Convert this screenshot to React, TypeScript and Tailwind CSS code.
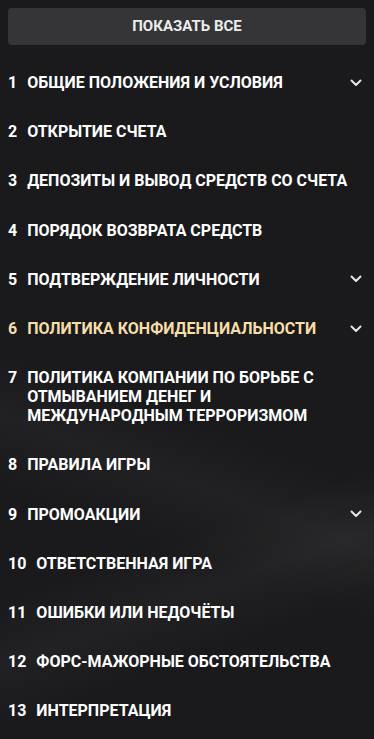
import React from "react";

interface Item { n: number; title: string; sub?: boolean; active?: boolean }

const ITEMS: Item[] = [
  { n: 1, title: "ОБЩИЕ ПОЛОЖЕНИЯ И УСЛОВИЯ", sub: true },
  { n: 2, title: "ОТКРЫТИЕ СЧЕТА" },
  { n: 3, title: "ДЕПОЗИТЫ И ВЫВОД СРЕДСТВ СО СЧЕТА" },
  { n: 4, title: "ПОРЯДОК ВОЗВРАТА СРЕДСТВ" },
  { n: 5, title: "ПОДТВЕРЖДЕНИЕ ЛИЧНОСТИ", sub: true },
  { n: 6, title: "ПОЛИТИКА КОНФИДЕНЦИАЛЬНОСТИ", sub: true, active: true },
  { n: 7, title: "ПОЛИТИКА КОМПАНИИ ПО БОРЬБЕ С ОТМЫВАНИЕМ ДЕНЕГ И МЕЖДУНАРОДНЫМ ТЕРРОРИЗМОМ" },
  { n: 8, title: "ПРАВИЛА ИГРЫ" },
  { n: 9, title: "ПРОМОАКЦИИ", sub: true },
  { n: 10, title: "ОТВЕТСТВЕННАЯ ИГРА" },
  { n: 11, title: "ОШИБКИ ИЛИ НЕДОЧЁТЫ" },
  { n: 12, title: "ФОРС-МАЖОРНЫЕ ОБСТОЯТЕЛЬСТВА" },
  { n: 13, title: "ИНТЕРПРЕТАЦИЯ" },
];

function Chevron() {
  return (
    <svg width="12" height="8" viewBox="0 0 12 8" fill="none" className="shrink-0 mr-1">
      <polyline points="1.5,1.5 6,6 10.5,1.5" stroke="#e6e6e6" strokeWidth="2" strokeLinecap="round" strokeLinejoin="round" />
    </svg>
  );
}

export default function App() {
  return (
    <div
      className="min-h-screen w-full bg-[#1a1a1c] bg-[linear-gradient(160deg,transparent_0%,transparent_68%,rgba(255,255,255,0.035)_75%,transparent_82%),linear-gradient(200deg,transparent_0%,transparent_55%,rgba(255,255,255,0.03)_62%,transparent_70%)] px-2 pt-2 pb-4 font-['Roboto',sans-serif]"
    >
      <button className="w-full h-[37px] rounded bg-[#353537] text-[15px] font-bold text-[#ececec]">
        ПОКАЗАТЬ ВСЕ
      </button>

      <ul className="mt-[13px]">
        {ITEMS.map((it) => (
          <li key={it.n} className="flex items-center gap-2 py-[15.1px] text-[16px] leading-[19px] font-bold">
            <div className={`flex flex-1 gap-[10px] ${it.active ? "text-[#f5dea9]" : "text-white"}`}>
              <span>{it.n}</span>
              <span>{it.title}</span>
            </div>
            {it.sub && <Chevron />}
          </li>
        ))}
      </ul>
    </div>
  );
}
